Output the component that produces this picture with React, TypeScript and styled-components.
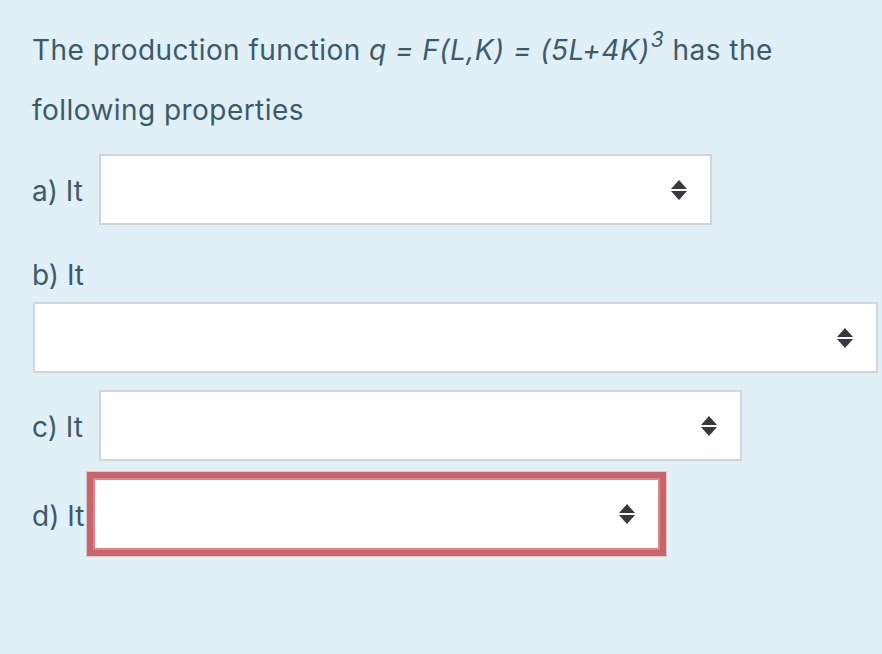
import React from 'react';
import styled, { createGlobalStyle } from 'styled-components';

const GlobalStyle = createGlobalStyle`
  html, body {
    margin: 0;
    padding: 0;
    background: #e1eff7;
  }
  body {
    font-family: Inter, "Noto Sans", "Liberation Sans", sans-serif;
    color: #3b5b69;
    -webkit-font-smoothing: antialiased;
  }
`;

const StyledPage = styled.div`
  width: 882px;
  height: 654px;
  box-sizing: border-box;
  padding: 20px 0 0 32px;
  background: #e1eff7;
  overflow: hidden;
`;

const StyledQuestion = styled.p`
  margin: 0;
  max-width: 800px;
  font-size: 28px;
  line-height: 60px;
  color: #3b5b69;
  letter-spacing: 0.45px;

  em {
    font-style: italic;
  }

  sup {
    font-size: 21px;
    line-height: 0;
    position: relative;
    top: -3px;
    margin-left: 1px;
  }
`;

const StyledRow = styled.div<{ $top: number }>`
  display: flex;
  align-items: center;
  margin-top: ${(p) => p.$top}px;
`;

const StyledStack = styled.div<{ $top: number }>`
  display: flex;
  flex-direction: column;
  margin-top: ${(p) => p.$top}px;
`;

const StyledLabel = styled.span<{ $gap?: number; $lineHeight?: number }>`
  font-size: 28px;
  line-height: ${(p) => p.$lineHeight ?? 34}px;
  color: #3b5b69;
  margin-right: ${(p) => p.$gap ?? 0}px;
  padding-top: 3px;
  white-space: nowrap;
`;

const StyledSelect = styled.div<{ $width: number; $height?: number; $invalid?: boolean; $offset?: number; $gapTop?: number }>`
  box-sizing: border-box;
  width: ${(p) => p.$width}px;
  height: ${(p) => p.$height ?? 71}px;
  margin-left: ${(p) => p.$offset ?? 0}px;
  margin-top: ${(p) => p.$gapTop ?? 0}px;
  background: #ffffff;
  border: 2px solid ${(p) => (p.$invalid ? '#df8488' : '#ced5db')};
  box-shadow: ${(p) =>
    p.$invalid ? '0 0 0 6px #c8646a, 0 0 0 7px #d9c9cd' : 'none'};
  display: flex;
  align-items: center;
  justify-content: flex-end;
  padding-right: 23px;
`;

const Arrows = () => (
  <svg width="16" height="20" viewBox="0 0 16 20" aria-hidden="true">
    <polygon points="8,0 16,9 0,9" fill="#343a40" />
    <polygon points="0,11 16,11 8,20" fill="#343a40" />
  </svg>
);

export default function App() {
  return (
    <>
      <GlobalStyle />
      <StyledPage>
        <StyledQuestion>
          The production function{' '}
          <em>
            q = F(L,K) = (5L+4K)<sup>3</sup>
          </em>{' '}
          has the following properties
        </StyledQuestion>

        <StyledRow $top={14}>
          <StyledLabel $gap={16}>a) It</StyledLabel>
          <StyledSelect $width={613}>
            <Arrows />
          </StyledSelect>
        </StyledRow>

        <StyledStack $top={18}>
          <StyledLabel $lineHeight={58}>b) It</StyledLabel>
          <StyledSelect $width={845} $offset={1} $gapTop={-2}>
            <Arrows />
          </StyledSelect>
        </StyledStack>

        <StyledRow $top={17}>
          <StyledLabel $gap={16}>c) It</StyledLabel>
          <StyledSelect $width={643}>
            <Arrows />
          </StyledSelect>
        </StyledRow>

        <StyledRow $top={17}>
          <StyledLabel $gap={9}>d) It</StyledLabel>
          <StyledSelect $width={567} $height={72} $invalid>
            <Arrows />
          </StyledSelect>
        </StyledRow>
      </StyledPage>
    </>
  );
}
